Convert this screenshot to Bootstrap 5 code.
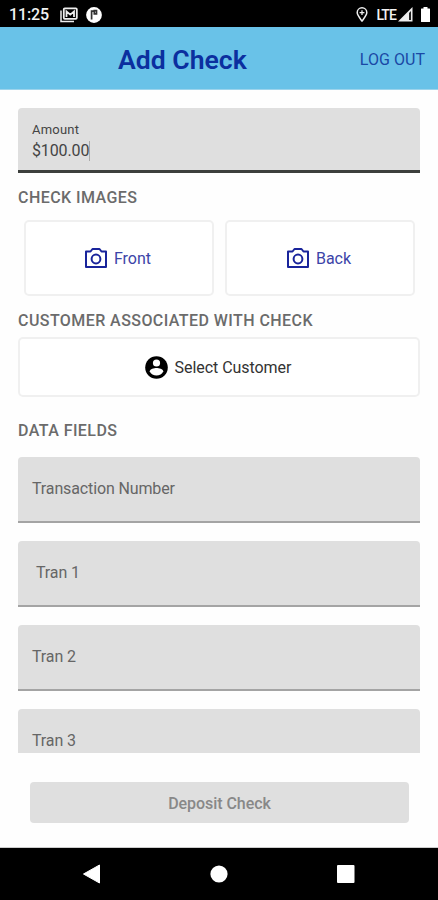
<!DOCTYPE html>
<html lang="en">
<head>
<meta charset="utf-8">
<meta name="viewport" content="width=device-width, initial-scale=1">
<title>Add Check</title>
<link href="https://cdn.jsdelivr.net/npm/bootstrap@5.3.0/dist/css/bootstrap.min.css" rel="stylesheet">
<style>
  body { font-family: Roboto, "Liberation Sans", sans-serif; font-size: 16px; line-height: 20px; color: #666; background: #fefefe; }
  .screen { height: 900px; }
  .status-strip { height: 27px; padding: 2px 8px 0 9px; font-size: 16px; font-weight: 500; color: #f2f2f2; }
  .status-strip span { letter-spacing: -.15px; }
  .status-strip .lte { font-size: 14px; letter-spacing: -.9px; margin: 0 2px 0 8px; }
  .mail-icon { margin-left: 11px; }
  .app-header { height: 63px; background: #69c2e8; color: #0b2f9f; padding: 3px 13px 0 0; border-bottom: 1px solid #9dd4ec; }
  .app-title { font-size: 26.6px; line-height: 32px; font-weight: 600; padding: 1px 0 0 5px; }
  .log-out { color: #1a48a5; font-size: 16px; letter-spacing: .05px; }
  .form-area { height: 663px; padding: 18px 18px 0; }
  .filled { height: 66px; flex: none; background: #dfdfdf; border-radius: 4px 4px 0 0; border-bottom: 2px solid #a4a4a4; padding: 0 14px; letter-spacing: -.13px; margin-bottom: 18px; }
  .filled.active { height: 65px; border-bottom: 3px solid #3c3f3c; padding-top: 5px; margin-bottom: 15px; color: #444; }
  .filled small { font-size: 13px; line-height: 18px; letter-spacing: .2px; }
  .amount-value { line-height: 23px; }
  .caret { width: 1px; height: 20px; background: #aaa; }
  .section-title { font-size: 16px; line-height: 20px; font-weight: 500; letter-spacing: .43px; color: #6b6b6b; margin: 0; }
  .tiles { gap: 11px; padding: 0 5px 0 6px; margin: 12px 0 15px; }
  .outlined { background: #fff; border: 2px solid #f0f0f0; border-radius: 5px; gap: 6px; }
  .outlined span { padding-top: 2px; }
  .photo-tile { flex: 1 1 0; height: 76px; color: #3c44a8; padding-right: 3px; }
  .customer-tile { height: 60px; flex: none; margin: 6px 0 24px; gap: 7px; color: #333; letter-spacing: -.05px; padding-right: 2px; }
  .data-title { margin-bottom: 16px; }
  .deposit-area { height: 95px; padding: 29px 29px 0 30px; border-bottom: 1px solid #ccc; }
  .deposit, .deposit:hover { height: 41px; background: #dfdfdf; color: #888; font-weight: 500; border-radius: 4px; letter-spacing: -.05px; }
  .deposit span { display: block; padding-top: 2px; }
  .system-nav { height: 52px; gap: 109px; padding-right: 1px; }
</style>
</head>
<body>
<div class="screen d-flex flex-column overflow-hidden">
  <div class="status-strip bg-black d-flex align-items-center">
    <span>11:25</span>
    <svg class="mail-icon" width="18" height="16" viewBox="0 0 18 16" fill="none" stroke="#eee"><path d="M1 3.5V14.5H14" stroke-width="1.5"/><rect x="3.8" y="1.3" width="13" height="10.5" rx="1" stroke-width="1.8"/><path d="M6.5 10V4.5L10.3 7.6L14 4.5V10" stroke-width="1.8"/></svg>
    <svg class="ms-2" width="16" height="16" viewBox="0 0 16 16"><circle cx="8" cy="8" r="7.9" fill="#fff"/><path d="M5.6 12.5V4.2H8.5M8.3 3.6H10.5V6.8H8.3Z" fill="none" stroke="#333" stroke-width="1.7"/></svg>
    <svg class="ms-auto" width="12" height="15" viewBox="0 0 12 15" fill="none" stroke="#eee"><path d="M6 14C3.5 10.7 1.2 8.3 1.2 5.6A4.8 4.8 0 0 1 10.8 5.6C10.8 8.3 8.5 10.7 6 14Z" stroke-width="1.5"/><path d="M6 3.2V8M3.6 5.6H8.4" stroke-width="1.3"/></svg>
    <span class="lte">LTE</span>
    <svg width="15" height="15" viewBox="0 0 15 15"><path d="M0 14.5L14.5 0V14.5Z" fill="#eee"/><path d="M11 6V13H13V4Z" fill="#222"/></svg>
    <svg class="ms-2" width="9" height="15" viewBox="0 0 9 15"><path d="M0 2Q0 1.5 .5 1.5H2.5V0H6.5V1.5H8.5Q9 1.5 9 2V14.5Q9 15 8.5 15H.5Q0 15 0 14.5Z" fill="#fff"/></svg>
  </div>

  <header class="app-header d-flex align-items-center">
    <h1 class="app-title m-0 flex-grow-1 text-center">Add Check</h1>
    <a class="log-out text-decoration-none" href="#">LOG OUT</a>
  </header>

  <main class="form-area d-flex flex-column overflow-hidden">
    <div class="filled active d-flex flex-column justify-content-center">
      <small>Amount</small>
      <div class="amount-value d-flex align-items-center"><span>$100.00</span><span class="caret"></span></div>
    </div>
    <h2 class="section-title">CHECK IMAGES</h2>
    <div class="d-flex tiles">
      <div class="outlined photo-tile d-flex align-items-center justify-content-center">
        <svg width="24" height="22" viewBox="0 0 24 22" fill="none" stroke="#19249b" stroke-width="2"><path d="M2 4.5H6.5L8.5 2H15.5L17.5 4.5H22V20H2Z" stroke-linejoin="round"/><circle cx="12" cy="12" r="4.4"/></svg>
        <span>Front</span>
      </div>
      <div class="outlined photo-tile d-flex align-items-center justify-content-center">
        <svg width="24" height="22" viewBox="0 0 24 22" fill="none" stroke="#19249b" stroke-width="2"><path d="M2 4.5H6.5L8.5 2H15.5L17.5 4.5H22V20H2Z" stroke-linejoin="round"/><circle cx="12" cy="12" r="4.4"/></svg>
        <span>Back</span>
      </div>
    </div>
    <h2 class="section-title">CUSTOMER ASSOCIATED WITH CHECK</h2>
    <div class="outlined customer-tile d-flex align-items-center justify-content-center">
      <svg width="23" height="23" viewBox="0 0 23 23"><circle cx="11.5" cy="11.5" r="11.3" fill="#000"/><circle cx="11.5" cy="7" r="3.6" fill="#fff"/><path d="M4.7 15.4C5 12.8 9 12 11.5 12S18 12.8 18.3 15.4C17 18 14.5 19.5 11.5 19.5S6 18 4.7 15.4Z" fill="#fff"/></svg>
      <span>Select Customer</span>
    </div>
    <h2 class="section-title data-title">DATA FIELDS</h2>
    <div class="filled d-flex align-items-center">Transaction Number</div>
    <div class="filled d-flex align-items-center"><span class="ps-1">Tran 1</span></div>
    <div class="filled d-flex align-items-center">Tran 2</div>
    <div class="filled d-flex align-items-center">Tran 3</div>
  </main>

  <footer class="deposit-area">
    <button class="deposit btn w-100 border-0 p-0" type="button"><span>Deposit Check</span></button>
  </footer>

  <nav class="system-nav bg-black d-flex align-items-center justify-content-center">
    <svg width="18" height="20" viewBox="0 0 18 20"><path d="M.5 10L16.5 1V19Z" fill="#fff" stroke="#fff" stroke-linejoin="round"/></svg>
    <svg width="18" height="18" viewBox="0 0 18 18"><circle cx="9" cy="9" r="8.6" fill="#fff"/></svg>
    <svg width="18" height="18" viewBox="0 0 18 18"><rect width="17.5" height="18" rx="1" fill="#fff"/></svg>
  </nav>
</div>
<script src="https://cdn.jsdelivr.net/npm/bootstrap@5.3.0/dist/js/bootstrap.bundle.min.js"></script>
</body>
</html>
